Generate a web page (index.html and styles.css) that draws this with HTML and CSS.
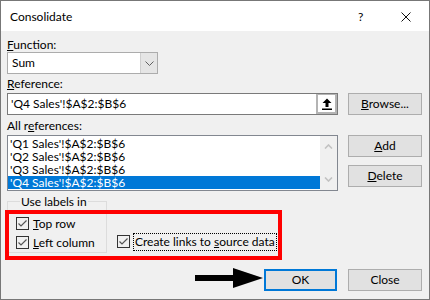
FILE: index.html
```html
<!DOCTYPE html>
<html>
<head>
<meta charset="utf-8">
<link rel="stylesheet" href="styles.css">
</head>
<body>
<div class="window">
  <div class="titlebar">
    <span class="title">Consolidate</span>
    <span class="help">?</span>
    <svg class="close-x" width="10" height="10" viewBox="0 0 10 10"><path d="M0.5 0.5 L9.5 9.5 M9.5 0.5 L0.5 9.5" stroke="#111" stroke-width="1" fill="none"/></svg>
  </div>
  <div class="content">
    <label class="field-label"><u>F</u>unction:</label>
    <div class="combo">
      <span class="combo-value">Sum</span>
      <span class="combo-btn"><svg width="9" height="5" viewBox="0 0 9 5"><path d="M0.5 0.5 L4.5 4.5 L8.5 0.5" stroke="#606060" fill="none"/></svg></span>
    </div>
    <label class="field-label gap-a"><u>R</u>eference:</label>
    <div class="row gap-a">
      <div class="ref-input">
        <span class="ref-value">'Q4 Sales'!$A$2:$B$6</span>
        <span class="collapse-btn"><svg width="10" height="12" viewBox="0 0 10 12"><path d="M5 0.5 L9.5 5 L6.5 5 L6.5 9 L3.5 9 L3.5 5 L0.5 5 Z" fill="#000"/><rect x="0" y="10.5" width="10" height="1.5" fill="#000"/></svg></span>
      </div>
      <button class="btn"><u>B</u>rowse...</button>
    </div>
    <label class="field-label gap-b">All r<u>e</u>ferences:</label>
    <div class="row gap-a">
      <div class="listbox">
        <ul class="items">
          <li>'Q1 Sales'!$A$2:$B$6</li>
          <li>'Q2 Sales'!$A$2:$B$6</li>
          <li>'Q3 Sales'!$A$2:$B$6</li>
          <li class="selected">'Q4 Sales'!$A$2:$B$6</li>
        </ul>
        <div class="scrollbar">
          <svg width="9" height="5" viewBox="0 0 9 5"><path d="M1 4.5 L4.5 1 L8 4.5" stroke="#c2c2c2" stroke-width="1.6" fill="none"/></svg>
          <svg width="9" height="5" viewBox="0 0 9 5"><path d="M1 0.5 L4.5 4 L8 0.5" stroke="#c2c2c2" stroke-width="1.6" fill="none"/></svg>
        </div>
      </div>
      <div class="side-buttons">
        <button class="btn"><u>A</u>dd</button>
        <button class="btn"><u>D</u>elete</button>
      </div>
    </div>
    <div class="options">
      <fieldset class="group">
        <legend>Use labels in</legend>
        <div class="check"><span class="box"><svg width="11" height="11" viewBox="0 0 11 11"><path d="M1.5 5.5 L4 8 L9.5 2.5" stroke="#555" stroke-width="1.2" fill="none"/></svg></span><span class="check-label"><u>T</u>op row</span></div>
        <div class="check"><span class="box"><svg width="11" height="11" viewBox="0 0 11 11"><path d="M1.5 5.5 L4 8 L9.5 2.5" stroke="#555" stroke-width="1.2" fill="none"/></svg></span><span class="check-label"><u>L</u>eft column</span></div>
      </fieldset>
      <div class="check links"><span class="box"><svg width="11" height="11" viewBox="0 0 11 11"><path d="M1.5 5.5 L4 8 L9.5 2.5" stroke="#555" stroke-width="1.2" fill="none"/></svg></span><span class="check-label focus">Create links to <u>s</u>ource data</span></div>
    </div>
    <div class="footer">
      <button class="btn default">OK</button>
      <button class="btn">Close</button>
    </div>
  </div>
  <div class="highlight"></div>
  <svg class="pointer" width="70" height="22" viewBox="0 0 70 22"><path d="M0 7 L38 7 L38 0 L68 10 L38 20 L38 13 L0 13 Z" fill="#000"/></svg>
</div>
</body>
</html>
```
FILE: styles.css
```css
html, body {
  margin: 0;
  padding: 0;
  background: #f0f0f0;
}
body {
  font-family: "Segoe UI", Lato, "Noto Sans", sans-serif;
  font-size: 12px;
  color: #000;
}
.window {
  position: relative;
  width: 430px;
  height: 300px;
  box-sizing: border-box;
  border: 1px solid #777;
  background: #f0f0f0;
  overflow: hidden;
}
.titlebar {
  height: 30px;
  background: #fff;
  display: flex;
  align-items: center;
  padding-left: 9px;
}
.title {
  flex: 1;
  line-height: 15px;
  margin-top: 1px;
}
.help {
  width: 6px;
  line-height: 15px;
  margin-top: 1px;
  margin-right: 37px;
}
.close-x {
  margin-right: 18px;
  margin-top: 1px;
}
.content {
  padding: 6px 7px 0 6px;
}
.field-label {
  display: block;
  line-height: 15px;
  height: 15px;
}
.gap-a { margin-top: 2px; }
.gap-b { margin-top: 3px; }
.combo {
  width: 151px;
  height: 22px;
  box-sizing: border-box;
  border: 1px solid #acacac;
  background: #fff;
  display: flex;
}
.combo-value {
  flex: 1;
  line-height: 20px;
  padding-left: 4px;
}
.combo-btn {
  width: 16px;
  background: #e5e5e5;
  border-left: 1px solid #cfcfcf;
  display: flex;
  align-items: center;
  justify-content: center;
}
.row {
  display: flex;
  gap: 10px;
}
.ref-input {
  width: 331px;
  height: 22px;
  box-sizing: border-box;
  border: 1px solid #7a7a7a;
  background: #fff;
  display: flex;
}
.ref-value {
  flex: 1;
  line-height: 20px;
  padding-left: 3px;
}
.collapse-btn {
  width: 21px;
  box-sizing: border-box;
  border: 2px solid #b4b4b4;
  border-top-width: 1px;
  border-right-width: 2px;
  background: #fff;
  display: flex;
  align-items: center;
  justify-content: center;
}
.btn {
  width: 74px;
  height: 22px;
  box-sizing: border-box;
  border: 1px solid #adadad;
  background: #e1e1e1;
  font: inherit;
  color: #000;
  padding: 0;
  line-height: 18px;
}
.listbox {
  width: 331px;
  height: 56px;
  box-sizing: border-box;
  border: 1px solid #828790;
  background: #fff;
  display: flex;
}
.items {
  flex: 1;
  list-style: none;
  margin: 0;
  padding: 1px 0 0 0;
}
.items li {
  height: 13px;
  line-height: 13px;
  padding-left: 2px;
  white-space: nowrap;
}
.items li.selected {
  background: #0078d7;
  color: #fff;
}
.scrollbar {
  width: 17px;
  background: #f0f0f0;
  display: flex;
  flex-direction: column;
  justify-content: space-between;
  align-items: center;
  padding: 8px 0 8px;
}
.side-buttons {
  display: flex;
  flex-direction: column;
  gap: 8px;
}
.options {
  display: flex;
  align-items: flex-end;
  margin-top: 3px;
}
.group {
  width: 100px;
  box-sizing: border-box;
  margin: 0;
  border: 1px solid #dcdcdc;
  padding: 5px 0 0 8px;
  min-width: 0;
}
.group legend {
  padding: 0 1px;
  margin-left: 4px;
  line-height: 15px;
}
.check {
  display: flex;
  align-items: center;
  height: 19px;
}
.box {
  width: 13px;
  height: 13px;
  box-sizing: border-box;
  border: 1px solid #333;
  display: flex;
  align-items: center;
  justify-content: center;
}
.check-label {
  margin-left: 4px;
  line-height: 15px;
  white-space: nowrap;
}
.links {
  margin-left: 10px;
  margin-bottom: 2px;
}
.links .check-label {
  margin-left: 3px;
  padding: 0 1px;
  border: 1px dotted #000;
  line-height: 16px;
}
.footer {
  display: flex;
  justify-content: flex-end;
  gap: 11px;
  margin-top: 16px;
}
.btn.default {
  border: 2px solid #0078d7;
  width: 73px;
}
.highlight {
  position: absolute;
  left: 4px;
  top: 209px;
  width: 277px;
  height: 50px;
  border: 4px solid #ff0000;
  box-sizing: border-box;
}
.pointer {
  position: absolute;
  left: 194px;
  top: 267px;
}
```
